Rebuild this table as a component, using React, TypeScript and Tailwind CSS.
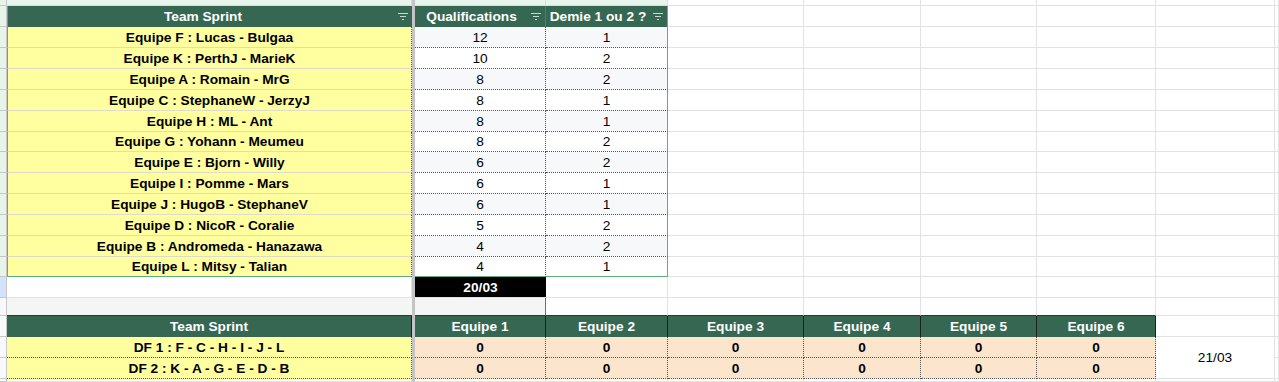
import type { ReactNode } from "react";

type Team = { name: string; quali: number; demie: number };

// Qualification standings
const teams: Team[] = [
  { name: "Equipe F : Lucas - Bulgaa", quali: 12, demie: 1 },
  { name: "Equipe K : PerthJ - MarieK", quali: 10, demie: 2 },
  { name: "Equipe A : Romain - MrG", quali: 8, demie: 2 },
  { name: "Equipe C : StephaneW - JerzyJ", quali: 8, demie: 1 },
  { name: "Equipe H : ML - Ant", quali: 8, demie: 1 },
  { name: "Equipe G : Yohann - Meumeu", quali: 8, demie: 2 },
  { name: "Equipe E : Bjorn - Willy", quali: 6, demie: 2 },
  { name: "Equipe I : Pomme - Mars", quali: 6, demie: 1 },
  { name: "Equipe J : HugoB - StephaneV", quali: 6, demie: 1 },
  { name: "Equipe D : NicoR - Coralie", quali: 5, demie: 2 },
  { name: "Equipe B : Andromeda - Hanazawa", quali: 4, demie: 2 },
  { name: "Equipe L : Mitsy - Talian", quali: 4, demie: 1 },
];

const finals = ["DF 1 : F - C - H - I - J - L", "DF 2 : K - A - G - E - D - B"];
const equipes = ["Equipe 1", "Equipe 2", "Equipe 3", "Equipe 4", "Equipe 5", "Equipe 6"];

const blank = "bg-white border-r border-b border-[#e2e2e2]";
const header = "bg-[#356752] text-white font-bold";

const Cell = ({ className = "", children }: { className?: string; children?: ReactNode }) => (
  <div className={`relative flex items-center justify-center overflow-hidden whitespace-nowrap pt-[2px] ${className}`}>
    {children}
  </div>
);

const FilterIcon = () => (
  <svg width="10" height="7" viewBox="0 0 10 7" className="absolute right-[4px] top-[7px]">
    <path d="M0 0.5h10M2 3.5h6M4 6.5h2" stroke="#c9d8d0" strokeWidth="1" />
  </svg>
);

const Blanks = ({ n }: { n: number }) => (
  <>
    {Array.from({ length: n }).map((_, i) => (
      <Cell key={i} className={blank} />
    ))}
  </>
);

const App = () => {
  return (
    <div className="h-[382px] w-[1279px] overflow-hidden bg-white font-['Liberation_Sans',Arial,sans-serif] text-[13.7px] text-black">
      <div className="grid h-full grid-cols-[7px_405px_3px_131px_122px_136px_117px_116px_119px_119px_1fr] grid-rows-[6px_21px_21px_21px_21px_21px_21px_20px_21px_21px_21px_21px_21px_20px_21px_18px_21px_21px_21px_1fr]">
        {/* frozen column divider */}
        <div className="col-start-3 row-span-full bg-[#c4c4c4]" />

        {/* merged date cell */}
        <Cell className="col-start-10 row-start-18 row-span-2 bg-white border-r border-b border-[#e2e2e2]">21/03</Cell>

        {/* top strip */}
        <Cell className="bg-[#e6f4ea] border-r border-b border-[#c7c7c7]" />
        <Cell className="bg-[#e7f5ec] border-r border-b border-[#dadce0]" />
        <Cell className="bg-[#e7f5ec] border-r border-b border-[#dadce0]" />
        <Cell className="bg-[#e7f5ec] border-r border-b border-[#dadce0]" />
        <Blanks n={6} />

        {/* table header */}
        <Cell className="bg-[#e6f4ea] border-r border-b border-[#c7c7c7]" />
        <Cell className={`${header} border-l border-l-[#5fae7f] pr-[14px]`}>
          Team Sprint
          <FilterIcon />
        </Cell>
        <Cell className={`${header} border-r border-r-[#527e6a] pr-[17px]`}>
          Qualifications
          <FilterIcon />
        </Cell>
        <Cell className={`${header} border-r border-r-[#5fae7f] pr-[17px]`}>
          Demie 1 ou 2 ?
          <FilterIcon />
        </Cell>
        <Blanks n={6} />

        {/* standings */}
        {teams.map((t, i) => {
          const last = i === teams.length - 1;
          const rowBg = i % 2 === 0 ? "bg-[#f6f8f9]" : "bg-white";
          return (
            <div key={t.name} className="contents">
              <Cell className="bg-[#e6f4ea] border-r border-b border-[#c7c7c7]" />
              <Cell
                className={`bg-[#ffff9f] font-bold border-l border-r border-b border-l-[#5fae7f] border-r-[#555] [border-right-style:dotted] ${
                  last ? "border-b-[#5fae7f]" : "border-b-[#dcdcc8]"
                }`}
              >
                {t.name}
              </Cell>
              <Cell
                className={`${rowBg} border-r border-b border-r-[#555] [border-right-style:dotted] ${
                  last ? "border-b-[#5fae7f]" : "border-b-[#555] [border-bottom-style:dotted]"
                }`}
              >
                {t.quali}
              </Cell>
              <Cell
                className={`${rowBg} border-r border-b border-r-[#5fae7f] ${
                  last ? "border-b-[#5fae7f]" : "border-b-[#555] [border-bottom-style:dotted]"
                }`}
              >
                {t.demie}
              </Cell>
              <Blanks n={6} />
            </div>
          );
        })}

        {/* date row */}
        <Cell className="bg-[#d3e3fd] border-r border-b border-[#c7c7c7]" />
        <Cell className={blank} />
        <Cell className="bg-black text-white font-bold border-b border-[#e2e2e2]">20/03</Cell>
        <Blanks n={7} />

        {/* empty row */}
        <Cell className="bg-[#f8f9fa] border-r border-b border-[#c7c7c7]" />
        <Cell className="bg-[#f4f5f5] border-b border-b-[#2a3a33]" />
        <Cell className="bg-[#f4f5f5] border-r border-b border-r-[#6f6f6f] border-b-[#2a3a33]" />
        <Cell className="bg-white border-r border-b border-r-[#e2e2e2] border-b-[#2a3a33]" />
        <Cell className="bg-white border-r border-b border-r-[#e2e2e2] border-b-[#2a3a33]" />
        <Cell className="bg-white border-r border-b border-r-[#e2e2e2] border-b-[#2a3a33]" />
        <Cell className="bg-white border-r border-b border-r-[#e2e2e2] border-b-[#2a3a33]" />
        <Cell className="bg-white border-r border-b border-r-[#e2e2e2] border-b-[#2a3a33]" />
        <Blanks n={2} />

        {/* finals header */}
        <Cell className="bg-[#f8f9fa] border-r border-b border-[#c7c7c7]" />
        <Cell className={`${header} border-r border-r-[#1f1f1f]`}>Team Sprint</Cell>
        {equipes.map((e) => (
          <Cell key={e} className={`${header} border-r border-r-[#1f1f1f]`}>
            {e}
          </Cell>
        ))}
        <Blanks n={2} />

        {/* finals rows */}
        {finals.map((f) => (
          <div key={f} className="contents">
            <Cell className="bg-[#f8f9fa] border-r border-b border-[#c7c7c7]" />
            <Cell className="bg-[#ffff9f] font-bold border-r border-b border-dotted border-[#555]">{f}</Cell>
            {equipes.map((e) => (
              <Cell key={e} className="bg-[#fce5cd] font-bold border-r border-b border-dotted border-[#555]">
                0
              </Cell>
            ))}
            <Blanks n={1} />
          </div>
        ))}

        {/* trailing row */}
        <Cell className="bg-[#f8f9fa] border-r border-b border-[#c7c7c7]" />
        <Blanks n={9} />
      </div>
    </div>
  );
};

export default App;
